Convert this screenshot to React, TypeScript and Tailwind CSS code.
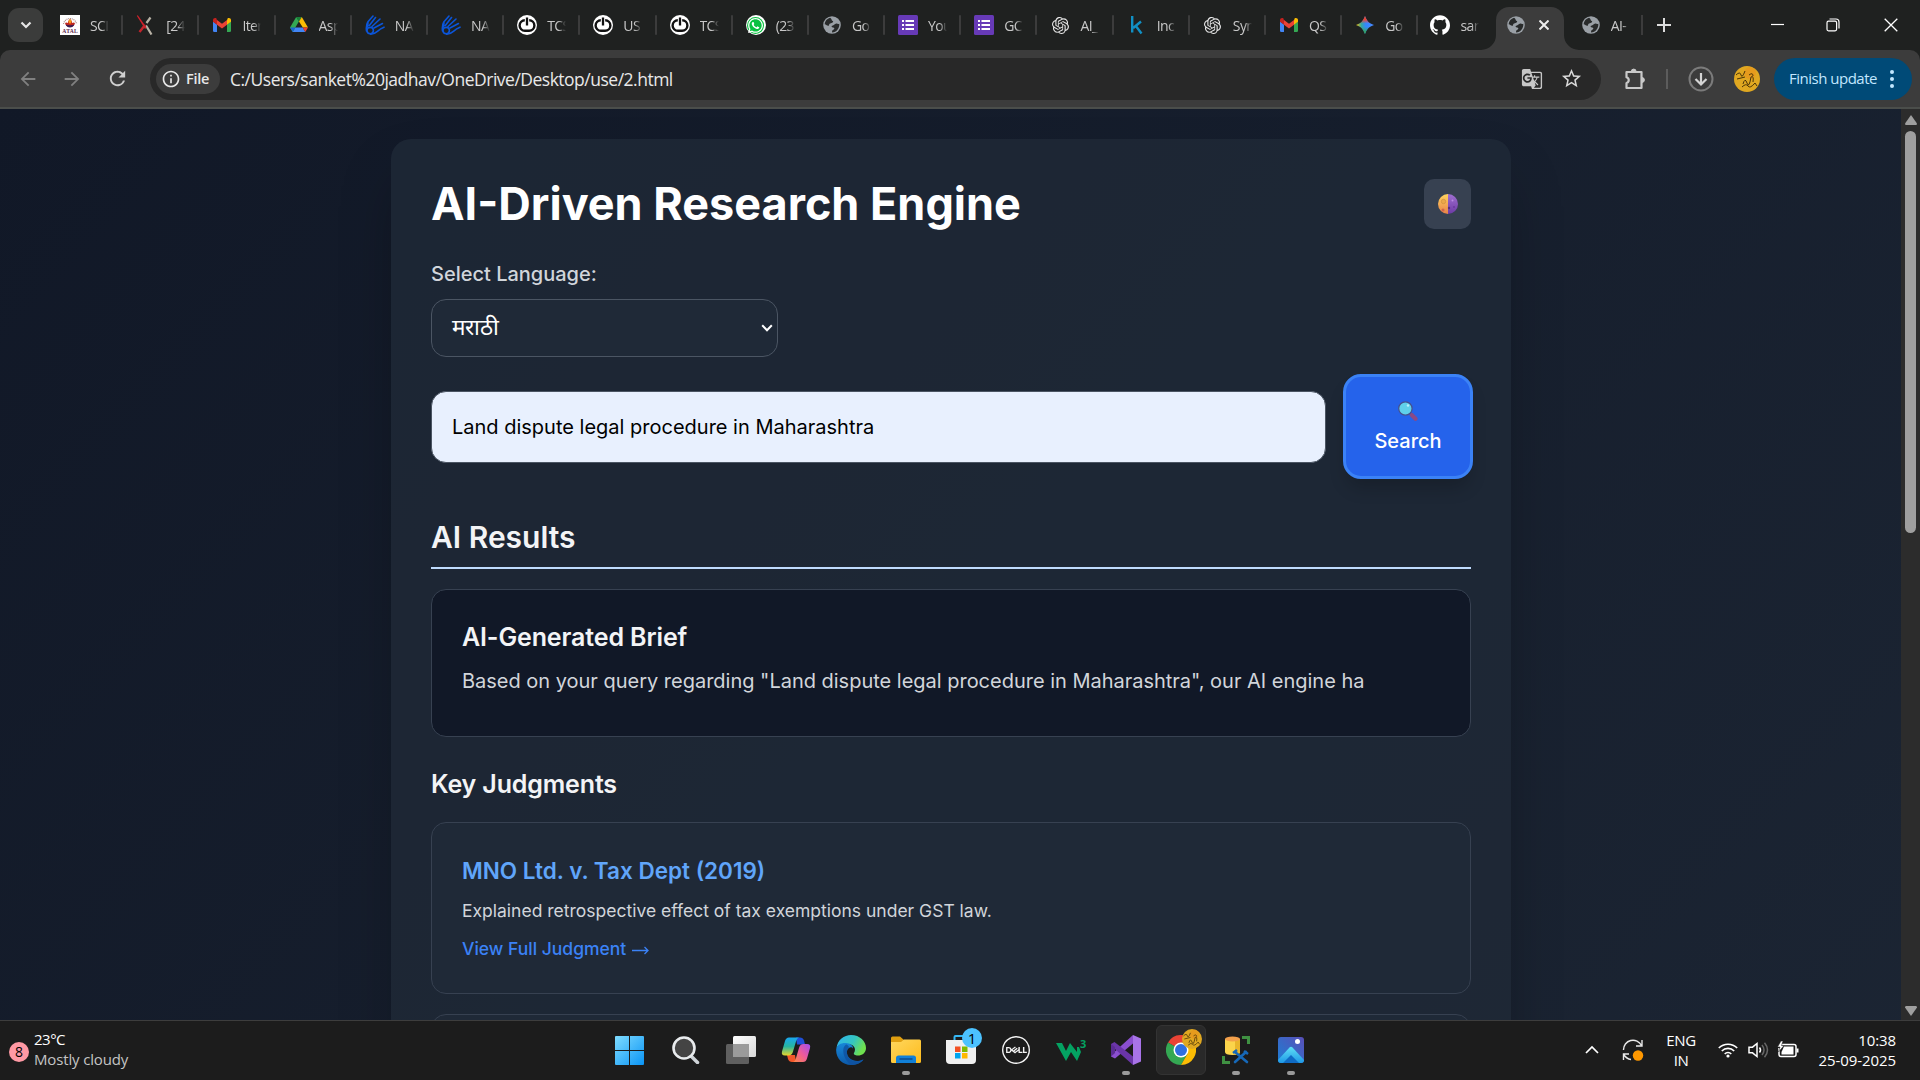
import React from "react";
import { MdGTranslate, MdStarBorder, MdArrowBack, MdArrowForward, MdRefresh, MdInfoOutline } from "react-icons/md";
import { SiOpenai, SiDell, SiGithub } from "react-icons/si";
import { FaWhatsapp } from "react-icons/fa";

const UI = "font-['Open_Sans','Noto_Sans',sans-serif]";

function Atal() {
  return (
    <svg viewBox="0 0 20 20" className="size-5">
      <rect width="20" height="20" fill="#fff" />
      <path d="M3.500 9a6.600 6.600 0 0 1 13 0" fill="none" stroke="#a88" strokeWidth="1.200" strokeDasharray="1 .8" />
      <path d="M5 8q1.500-1 3 0q-.5-2 2-4q2.500 2 2 4q1.500-1 3 0q-1 4-5 4t-5-4z" fill="#c2281e" />
      <path d="M8.500 7q0-2 1.500-3q1.500 1 1.500 3l-1.500 2z" fill="#f7a11b" />
      <path d="M5.500 9.500q4.500 1.500 9 0q-1.500 3-4.500 3t-4.500-3z" fill="#3b1d52" />
      <text x="10" y="18" fontSize="5.600" fontWeight="700" textAnchor="middle" fontFamily="Liberation Serif, serif" fill="#5b1e4b" textLength="15.500">ATAL</text>
    </svg>
  );
}
function XLogo() {
  return (
    <svg viewBox="0 0 20 20" className="size-5">
      <path d="M14.500 2.500 10.500 8M10 10.500l5.500 9" stroke="#b9b3a6" strokeWidth="2.200" fill="none" />
      <path d="M1.800.3 10.500 12.500 9 14 .8.8z" fill="#d3202a" />
      <path d="M9 10 3.500 17" stroke="#c3242b" strokeWidth="2.400" />
    </svg>
  );
}
function Gmail() {
  return (
    <svg viewBox="0 0 20 20" className="size-5">
      <path d="M1 6.500 5 9.500V17H2.300A1.300 1.300 0 0 1 1 15.700z" fill="#4285f4" />
      <path d="M19 6.500 15 9.500V17h2.700a1.300 1.300 0 0 0 1.300-1.300z" fill="#34a853" />
      <path d="M15 5.300V9.700l4-3V5c0-1.800-2-2.700-3.300-1.700z" fill="#fbbc04" />
      <path d="M5 9.700V5l5 3.800L15 5v4.700l-5 3.800z" fill="#ea4335" />
      <path d="M1 5v1.700l4 3V5.300l-.7-2C3 2.300 1 3.200 1 5z" fill="#c5221f" />
    </svg>
  );
}
function Drive() {
  return (
    <svg viewBox="0 0 20 20" className="size-5">
      <path d="M7.200 2 1 12.600l2.700 4.400L10 6.300z" fill="#34a853" />
      <path d="M7.200 2h5.600L10 6.400z" fill="#188038" />
      <path d="M12.800 2 19 12.600h-5.200L10 6.400z" fill="#fbbc04" />
      <path d="M6.300 12.600h7.400l2.600 4.400H3.700z" fill="#4285f4" />
      <path d="M13.700 12.600H19L16.300 17z" fill="#ea4335" />
      <path d="M1 12.600h5.300L3.700 17z" fill="#1967d2" />
    </svg>
  );
}
function Hand() {
  return (
    <svg viewBox="0 0 20 20" className="size-5" fill="none" stroke="#0b55d9" strokeWidth="1.600" strokeLinecap="round">
      <circle cx="5.200" cy="15.600" r="3.200" />
      <path d="M1.500 16C1 12 1.300 9.500 2.800 7L8 1M4.300 10.500 10.500 2.500M7 11.500 15 4M9 13 17.500 8.500M5.500 19.200C12 19.300 11.500 15 19 12.200M3 7.500 2.500 12" />
    </svg>
  );
}
function Power() {
  return (
    <svg viewBox="0 0 20 20" className="size-5">
      <circle cx="10" cy="10" r="10" fill="#fff" />
      <rect x="2.600" y="5.200" width="14.800" height="10.600" rx="5.300" fill="none" stroke="#111" strokeWidth="2.400" />
      <path d="M7.800 3h4.400v8H7.800z" fill="#fff" />
      <path d="M10 2.500v8" stroke="#111" strokeWidth="2.300" />
    </svg>
  );
}
function WhatsApp() {
  return (
    <span className="flex size-5 items-center justify-center rounded-full bg-white">
      <span className="flex size-[17px] items-center justify-center rounded-full bg-[#0ac140] text-white"><FaWhatsapp size={17} /></span>
    </span>
  );
}
function Globe() {
  return (
    <svg viewBox="0 0 20 20" className="size-5">
      <circle cx="10" cy="10" r="8.800" fill="#9aa0a6" />
      <path d="M8 2.800c2.500 1.200.8 2.600 2.800 3.200 1.200 1-.8 2-2.600 2.400-1.800.6-.4 2.200-2 2.300C4.500 10.500 3.800 9 2.600 9.200 3 6 5 3.600 8 2.800zM17.300 8.700c-1.300.7-2-.4-3.600 0-1.400.6-2.200 1.800-4 2.200-.6 1.300 1.200 1.400 2.200 1.800.9.700.2 1.900-1 2.300-1 .8-.9 1.700-.8 2.400 4.300-.2 7.600-3.900 7.200-8.700z" fill="#292b2b" />
    </svg>
  );
}
function Forms() {
  return (
    <svg viewBox="0 0 20 20" className="size-5">
      <rect width="20" height="20" rx="1.500" fill="#673ab7" />
      <path d="M4 6h2M4 10h2M4 14h2M7.500 6H16M7.500 10H16M7.500 14H16" stroke="#fff" strokeWidth="2.200" />
    </svg>
  );
}
function Kaggle() {
  return (
    <svg viewBox="0 0 20 20" className="size-5" fill="none" stroke="#1190c4" strokeWidth="2.400">
      <path d="M5.200 1v16.500M14 6.500 6.200 13M8.500 10.500l6 8" />
    </svg>
  );
}
function Gemini() {
  return (
    <svg viewBox="0 0 20 20" className="size-5">
      <defs>
        <linearGradient id="gem" x1="0" y1="0.500" x2="1" y2="0.500"><stop offset="0" stopColor="#fbbc04" /><stop offset=".3" stopColor="#34a8a0" /><stop offset=".55" stopColor="#3186ff" /><stop offset="1" stopColor="#4b8bff" /></linearGradient>
        <linearGradient id="gem2" x1="0" y1="0" x2="0" y2="1"><stop offset="0" stopColor="#ea4335" /><stop offset=".2" stopColor="#ea4335" /><stop offset=".42" stopColor="#ea4335" stopOpacity="0" /><stop offset=".6" stopColor="#34a853" stopOpacity="0" /><stop offset=".9" stopColor="#34a853" /></linearGradient>
      </defs>
      <path d="M10 1c1.800 5 4 7.200 9 9-5 1.800-7.200 4-9 9-1.800-5-4-7.200-9-9 5-1.800 7.200-4 9-9z" fill="url(#gem)" />
      <path d="M10 1c1.800 5 4 7.200 9 9-5 1.800-7.200 4-9 9-1.800-5-4-7.200-9-9 5-1.800 7.200-4 9-9z" fill="url(#gem2)" />
    </svg>
  );
}

const tabs: [React.ReactNode, string][] = [
  [<Atal />, "SCI"], [<XLogo />, "[24"], [<Gmail />, "Iter"], [<Drive />, "Asp"], [<Hand />, "NA"], [<Hand />, "NA"],
  [<Power />, "TCS"], [<Power />, "US"], [<Power />, "TCS"], [<WhatsApp />, "(23"], [<Globe />, "Go"], [<Forms />, "You"], [<Forms />, "GC"],
  [<SiOpenai size={17} color="#e8e8e8" />, "AI_"], [<Kaggle />, "Inc"], [<SiOpenai size={17} color="#e8e8e8" />, "Syn"],
  [<Gmail />, "QS"], [<Gemini />, "Go"],
];

function TabTitle({ children }: { children: React.ReactNode }) {
  return <span className="ml-[10px] w-[19px] overflow-hidden whitespace-nowrap pt-px text-[14px] tracking-[-0.600px] text-[#c8c8c8] [mask-image:linear-gradient(to_right,black_60%,transparent)]">{children}</span>;
}

function TabStrip() {
  return (
    <div className="flex h-[50px] shrink-0">
      <div className="mt-2 mr-[4px] ml-2 flex h-[34px] w-[35px] items-center justify-center rounded-[11px] bg-[#3b3c3b]">
        <svg viewBox="0 0 12 8" className="h-2 w-3" fill="none" stroke="#e6e6e6" strokeWidth="2.200"><path d="m1.500 1.500 4.500 4.500 4.500-4.500" /></svg>
      </div>
      {tabs.map(([icon, t], i) => (
        <div key={i} className="flex h-[50px] w-[76.200px] shrink-0 items-center pl-[13px]">
          <span className="flex size-5 shrink-0 items-center justify-center">{icon}</span>
          <TabTitle>{t}</TabTitle>
          <span className="ml-auto h-5 w-[2px] shrink-0 rounded bg-[#3c3c3c]" />
        </div>
      ))}
      <div className="flex w-[77.400px] shrink-0 items-center pl-[12px]">
        <SiGithub size={20} color="#fff" />
        <TabTitle>san</TabTitle>
      </div>
      <div className="relative mt-[7px] flex h-[43px] w-[68px] shrink-0 items-center rounded-t-[13px] bg-[#3c3c3c] pb-[7px] pl-[10px]">
        <svg viewBox="0 0 15 15" className="absolute bottom-0 -left-[15px] size-[15px]"><path d="M15 0v15H0A15 15 0 0 0 15 0" fill="#3c3c3c" /></svg>
        <svg viewBox="0 0 15 15" className="absolute -right-[15px] bottom-0 size-[15px]"><path d="M0 0v15h15A15 15 0 0 1 0 0" fill="#3c3c3c" /></svg>
        <Globe />
        <svg viewBox="0 0 10 10" className="ml-[13px] size-[10px]" stroke="#eee" strokeWidth="2"><path d="m.5.5 9 9m0-9-9 9" /></svg>
      </div>
      <div className="flex w-[79px] items-center pl-[17px]">
        <Globe />
        <TabTitle>AI-</TabTitle>
        <span className="ml-auto h-5 w-[2px] bg-[#3c3c3c]" />
      </div>
      <div className="flex items-center pl-[14px]">
        <svg viewBox="0 0 14 14" className="size-[14px]" stroke="#ddd" strokeWidth="2"><path d="M7 0v14M0 7h14" /></svg>
      </div>
      <div className="mr-[22px] ml-auto flex items-center">
        <svg viewBox="0 0 14 14" className="size-[14px]" stroke="#fff" strokeWidth="1.200"><path d="M1 6.500h13" /></svg>
        <svg viewBox="0 0 14 14" className="ml-[42px] size-[14px]" fill="none" stroke="#fff" strokeWidth="1.200"><rect x="1" y="3.200" width="9.600" height="9.600" rx="1.500" /><path d="M3.500 1h6.500q3 0 3 3v6.500" /></svg>
        <svg viewBox="0 0 14 14" className="ml-[44px] size-[14px]" stroke="#fff" strokeWidth="1.300"><path d="m.7.700 12.600 12.600M13.300.700.700 13.300" /></svg>
      </div>
    </div>
  );
}

function Avatar() {
  return (
    <svg viewBox="0 0 26 26" className="size-full">
      <circle cx="13" cy="13" r="13" fill="#e0a821" />
      <circle cx="16" cy="7" r="6" fill="#e8951c" opacity=".7" />
      <path d="M2 9q4-4 5 0t4-4M3 13l8-2M9 18q2-7 4-1t4-6q3-2 2 5M8 21q4-4 6-1t7-3l2 3M15 9q4-3 4 1" fill="none" stroke="#4a3408" strokeWidth="1" />
    </svg>
  );
}

function Toolbar() {
  return (
    <div className="flex h-[59px] shrink-0 items-center rounded-t-[10px] border-b-2 border-[#4b4e4b] bg-[#3c3c3c]">
      <MdArrowBack size={22} color="#808080" className="ml-[17px]" />
      <MdArrowForward size={22} color="#808080" className="ml-[22px]" />
      <MdRefresh size={23} color="#cfcfcf" className="ml-[23px]" />
      <div className="ml-[21px] flex h-[42px] w-[1451px] items-center rounded-full bg-[#282828] pr-[18px] pl-[6px]">
        <div className="flex h-[30px] w-16 items-center rounded-full bg-[#3c3c3c] pl-[5px] text-[#e8e8e8]">
          <MdInfoOutline size={20} />
          <span className="ml-[5px] text-[14.500px] font-semibold tracking-[-0.300px]">File</span>
        </div>
        <span className="ml-[10px] pt-[2px] text-[17.500px] tracking-[-0.500px] whitespace-nowrap text-[#e8e8e8]">C:/Users/sanket%20jadhav/OneDrive/Desktop/use/2.html</span>
        <MdGTranslate size={22} color="#c7c7c7" className="ml-auto" />
        <MdStarBorder size={23} color="#d8d8d8" className="ml-[17px]" />
      </div>
      <svg viewBox="0 0 24 24" className="ml-[22px] size-6" fill="none" stroke="#c9c9c9" strokeWidth="2.200" strokeLinejoin="round">
        <path d="M3.500 5h15v16h-15v-5a3 3 0 0 0 0-5.800z" />
        <path d="M8.300 4.500a2.400 2.400 0 0 1 4.800 0z" fill="#c9c9c9" strokeWidth="1" /><path d="M19 10.600a2.400 2.400 0 0 1 0 4.800z" fill="#c9c9c9" strokeWidth="1" />
      </svg>
      <span className="ml-[19px] h-5 w-[2px] bg-[#5c5c5c]" />
      <svg viewBox="0 0 26 26" className="ml-5 size-[26px]" fill="none"><circle cx="13" cy="13" r="11.500" stroke="#7b7b7b" strokeWidth="2" /><path d="M13 7v11M7.500 13 13 18.500 18.500 13" stroke="#d5d5d5" strokeWidth="2.200" /></svg>
      <span className="ml-5 size-[26px]"><Avatar /></span>
      <div className="ml-[14px] flex h-[42px] w-[138px] items-center rounded-full bg-[#004a77] pl-[15px] text-[15px] tracking-[-0.500px] whitespace-nowrap text-[#c2e7ff]">
        <span className="w-[89px]">Finish update</span>
        <svg viewBox="0 0 4 18" className="ml-3 h-[18px] w-1" fill="#c2e7ff"><circle cx="2" cy="2" r="2" /><circle cx="2" cy="9" r="2" /><circle cx="2" cy="16" r="2" /></svg>
      </div>
    </div>
  );
}

function MoonEmoji() {
  return (
    <svg viewBox="0 0 20 20" className="size-5">
      <defs>
        <linearGradient id="my" x1="0" y1="0" x2="0" y2="1"><stop offset="0" stopColor="#ffd45e" /><stop offset="1" stopColor="#e8824a" /></linearGradient>
        <linearGradient id="mp" x1="0" y1="0" x2="0" y2="1"><stop offset="0" stopColor="#a06fd0" /><stop offset="1" stopColor="#6d3aa5" /></linearGradient>
      </defs>
      <path d="M10 0a10 10 0 0 0 0 20z" fill="url(#my)" />
      <path d="M10 0a10 10 0 0 1 0 20z" fill="url(#mp)" />
      <circle cx="5.500" cy="7.500" r="2.200" fill="#eba84a" stroke="#c88a3c" strokeWidth=".6" />
      <circle cx="5" cy="16" r="1.500" fill="#d0644a" />
      <circle cx="11" cy="14" r="1.200" fill="#573080" />
      <circle cx="14.500" cy="6.500" r="1" fill="#b78be0" /><circle cx="16" cy="13" r="1" fill="#6a3a9c" />
    </svg>
  );
}
function MagnifierEmoji() {
  return (
    <svg viewBox="0 0 20 20" className="size-5 shrink-0">
      <path d="m12.500 12.500 2 2" stroke="#5a4a78" strokeWidth="2.500" />
      <path d="m13.800 14 3.700 3.700" stroke="#8a4a86" strokeWidth="4.200" strokeLinecap="round" />
      <circle cx="7.400" cy="7.500" r="6.700" fill="#5fd0ea" stroke="#46508c" strokeWidth="1.200" />
      <circle cx="10" cy="4.500" r="1.200" fill="#b9f0fa" />
    </svg>
  );
}

function Page() {
  return (
    <main className="h-[1967px] w-[1901px] shrink-0 bg-linear-to-br from-[#111827] to-[#1f2937] pt-[30px] pl-[391px] font-['Inter',sans-serif]">
      <div className="h-[1900px] w-[1120px] rounded-[20px] bg-[#1f2937]/80 p-10 shadow-[0_31px_62px_-15px_rgba(0,0,0,0.35)]">
        <div className="flex h-[50px] items-center justify-between">
          <h1 className="text-[45px] leading-[50px] font-bold whitespace-nowrap text-white">AI-Driven Research Engine</h1>
          <div className="flex h-[50px] w-[47px] items-center justify-center rounded-[10px] bg-[#374151]"><MoonEmoji /></div>
        </div>
        <div className="mt-[30px] text-[20px] leading-[30px] font-medium text-[#d1d5db]">Select Language:</div>
        <div className="mt-[10px] flex h-[58px] w-[347px] items-center justify-between rounded-[15px] border border-[#4b5563] bg-[#1f2937] pr-1 pl-5 text-[22.500px] leading-[30px] text-white">
          <span className="pb-[3px]">मराठी</span>
          <svg viewBox="0 0 12 8" className="h-2 w-3" fill="none" stroke="#fff" strokeWidth="2"><path d="m1.200 1.200 4.800 5 4.800-5" /></svg>
        </div>
        <div className="mt-[20px] flex h-[100px] items-center gap-5">
          <div className="flex h-[72px] w-[895px] items-center rounded-[15px] border border-[#4b5563] bg-[#e8f0fe] pl-5 text-[20px] text-black">Land dispute legal procedure in Maharashtra</div>
          <div className="-mt-px -mr-[2px] -ml-[3px] flex h-[105px] w-[130px] shrink-0 flex-col items-center rounded-[18px] border-3 border-[#3b82f6] bg-[#2563eb] pt-[24px] text-[20px] leading-[30px] font-medium text-white shadow-[0_12px_18px_-4px_rgba(0,0,0,0.2)]">
            <MagnifierEmoji />
            <span className="mt-[5px]">Search</span>
          </div>
        </div>
        <h2 className="mt-[40px] h-[52px] border-b-2 border-[#bfdbfe] text-[30px] leading-[40px] font-semibold text-[#f3f4f6]">AI Results</h2>
        <section className="mt-5 h-[148px] rounded-[15px] border border-[#374151] bg-[#111827] px-[30px] pt-[30px]">
          <h3 className="text-[25px] leading-[35px] font-semibold tracking-[-0.120px] text-[#f3f4f6]">AI-Generated Brief</h3>
          <p className="mt-[10px] text-[20px] leading-[32px] tracking-[-0.012px] whitespace-nowrap text-[#d1d5db]">Based on your query regarding "Land dispute legal procedure in Maharashtra", our AI engine ha</p>
        </section>
        <h3 className="mt-[30px] text-[25px] leading-[35px] font-semibold tracking-[-0.150px] text-[#f3f4f6]">Key Judgments</h3>
        <section className="mt-5 h-[172px] rounded-[15px] border border-[#374151] bg-[#1f2937] px-[30px] pt-[30px]">
          <h4 className="text-[22.500px] leading-[35px] font-semibold text-[#60a5fa]">MNO Ltd. v. Tax Dept (2019)</h4>
          <p className="mt-[8px] text-[17.500px] leading-[30px] text-[#d1d5db]">Explained retrospective effect of tax exemptions under GST law.</p>
          <div className="mt-[8px] flex items-center text-[17.500px] leading-[30px] font-medium text-[#3b82f6]">
            View Full Judgment
            <svg viewBox="0 0 17 9" className="mt-[3px] ml-[6px] h-[9px] w-[17px]" fill="none" stroke="#3b82f6" strokeWidth="1.300"><path d="M0 4.500h16M12.500 1l3.500 3.500L12.500 8" /></svg>
          </div>
        </section>
        <section className="mt-5 h-[172px] rounded-[15px] border border-[#374151] bg-[#1f2937]" />
      </div>
    </main>
  );
}

function Scrollbar() {
  return (
    <div className="flex h-full w-[19px] shrink-0 flex-col items-center bg-[#2c2c2c]">
      <svg viewBox="0 0 12 10" className="mt-[6px] h-[10px] w-3" fill="#9f9f9f"><path d="M6 0 12 8.500Q12 10 11 10H1Q0 10 0 8.500z" /></svg>
      <div className="mt-[6px] h-[402px] w-[11px] rounded-full bg-[#9f9f9f]" />
      <svg viewBox="0 0 12 10" className="mt-auto mb-[4px] h-[10px] w-3" fill="#9f9f9f"><path d="M6 10 12 1.500Q12 0 11 0H1Q0 0 0 1.500z" /></svg>
    </div>
  );
}

function Win() {
  return (
    <svg viewBox="0 0 29 29" className="mr-[3px] size-[29px]">
      <defs><linearGradient id="win" x1="0" y1="0" x2="29" y2="29" gradientUnits="userSpaceOnUse"><stop offset="0" stopColor="#7fdcff" /><stop offset="1" stopColor="#0a94f5" /></linearGradient></defs>
      <path d="M0 1q0-1 1-1h13v14H0zM15 0h13q1 0 1 1v13H15zM0 15h14v14H1q-1 0-1-1zM15 15h14v13q0 1-1 1H15z" fill="url(#win)" />
    </svg>
  );
}
function SearchI() {
  return (
    <svg viewBox="0 0 28 28" className="size-7" fill="none">
      <path d="m19 20 6.500 6.500" stroke="#cfd4d8" strokeWidth="3.500" strokeLinecap="round" />
      <circle cx="12" cy="12" r="10.500" fill="#444" stroke="#e9ecee" strokeWidth="2.600" />
    </svg>
  );
}
function TaskView() {
  return (
    <svg viewBox="0 0 30 28" className="h-7 w-[30px]">
      <defs><linearGradient id="tv" x1="0" y1="0" x2="1" y2="1"><stop offset="0" stopColor="#fff" /><stop offset="1" stopColor="#d8d8d8" /></linearGradient></defs>
      <rect x="0" y="8" width="23" height="20" rx="1.500" fill="#5f5f5f" />
      <rect x="7" y="0" width="23" height="21" rx="1.500" fill="url(#tv)" />
      <path d="M7 8h16v13H7z" fill="#9b9b9b" />
    </svg>
  );
}
function Copilot() {
  return (
    <svg viewBox="0 0 30 28" className="h-7 w-[30px]">
      <defs>
        <linearGradient id="c1" x1="0" y1="0" x2="0" y2="1"><stop offset="0" stopColor="#19a7f0" /><stop offset=".5" stopColor="#27b5a0" /><stop offset="1" stopColor="#e8d62c" /></linearGradient>
        <linearGradient id="c2" x1="1" y1="0" x2="0" y2="1"><stop offset="0" stopColor="#a14df0" /><stop offset=".5" stopColor="#ee5a9a" /><stop offset="1" stopColor="#fb8b44" /></linearGradient>
      </defs>
      <path d="M15 1.500h4q3 0 4 3l1 4h-8z" fill="#1f4fd8" />
      <path d="M15 26h-4q-3 0-4-3l-1-4h8z" fill="#f4572a" />
      <path d="M8 1.500h10q-2 .5-3 4l-3 10q-1 4-4.500 4H4q-4 0-3-4L4 5Q5 1.500 8 1.500z" fill="url(#c1)" />
      <path d="M22 26H12q2-.5 3-4l3-10q1-4 4.500-4H26q4 0 3 4l-3 10.500Q25 26 22 26z" fill="url(#c2)" />
    </svg>
  );
}
function Edge() {
  return (
    <svg viewBox="0 0 30 30" className="size-[30px]">
      <defs>
        <linearGradient id="e1" x1="0" y1="0" x2="1" y2=".4"><stop offset="0" stopColor="#2eb3f0" /><stop offset=".6" stopColor="#35c5c0" /><stop offset="1" stopColor="#6fe04e" /></linearGradient>
        <linearGradient id="e2" x1="0" y1="0" x2="0" y2="1"><stop offset="0" stopColor="#1787d8" /><stop offset="1" stopColor="#0c59a8" /></linearGradient>
      </defs>
      <path d="M.5 13C1.500 5 8 0 15 0c9 0 15 6.500 15 13 0 5-4 7.500-8 7.500-3 0-4.800-1.200-4-2.500 3-5-1-9-6-9S2 10 .5 13z" fill="url(#e1)" />
      <path d="M.2 14C1 9.500 6 7.500 10 8c4.500.3 7.500 3 7 5.500C16 11.500 12 12 11 16c-1 6 5 10.500 11 10 3-.3 4.500-1.600 5.500-1.500C24.500 28.500 20 30 15 30 6 30-.5 23 .2 14z" fill="url(#e2)" />
      <path d="M10 9.500C5 13 7 24 15 29.900c5 .3 10-2 12.500-5.400-8 4-15.500.5-16.500-6-.3-3 .5-5 2-6.200-.4-1.500-1.500-2.500-3-2.800z" fill="#0f4f9e" opacity=".75" />
    </svg>
  );
}
function Folder() {
  return (
    <svg viewBox="0 0 30 28" className="h-7 w-[30px]">
      <defs><linearGradient id="fo" x1="0" y1="0" x2="1" y2="1"><stop offset="0" stopColor="#ffd75e" /><stop offset="1" stopColor="#fdbb1c" /></linearGradient></defs>
      <path d="M0 2q0-1.500 1.500-1.500H9L13 4H28v10H0z" fill="#e09f10" />
      <path d="M0 6h10l3-2.500h15.500Q30 3.500 30 5v20.500q0 1.500-1.500 1.500h-27Q0 27 0 25.500z" fill="url(#fo)" />
      <path d="M5 27v-5q0-2.500 2.500-2.500h15Q25 19.500 25 22v5z" fill="#1180d8" /><path d="M8.500 23h13" stroke="#0b4a8c" strokeWidth="1.500" />
    </svg>
  );
}
function Store() {
  return (
    <span className="relative">
      <svg viewBox="0 0 30 30" className="size-[30px]">
        <path d="M8.500 5V2q0-1 1-1h10q1 0 1 1v3" fill="none" stroke="#35b8f5" strokeWidth="2" />
        <path d="M0 5h30v20q0 4-4 4H4q-4 0-4-4z" fill="#f0f0f0" />
        <path d="M9 11.500h5.500V17H9z" fill="#f25022" /><path d="M16 11.500h5.500V17H16z" fill="#7fba00" /><path d="M9 18h5.500v5.500H9z" fill="#00a4ef" /><path d="M16 18h5.500v5.500H16z" fill="#ffb900" />
      </svg>
      <span className="absolute -top-[7px] left-[16px] flex size-5 items-center justify-center rounded-full bg-[#4cc2ff] text-[15px] leading-none text-black">1</span>
    </span>
  );
}
function Dell() {
  return <SiDell size={28} color="#f4f4f4" />;
}
function W3() {
  return (
    <svg viewBox="0 0 30 24" className="h-6 w-[30px]">
      <path d="M0 5h6l4 8 4-8 7 9v-5h2l2 5-4 9-6-9-5 9z" fill="#04a262" />
      <text x="24" y="10" fontSize="11" fontWeight="700" fontFamily="Open Sans, sans-serif" fill="#04a262">3</text>
    </svg>
  );
}
function VS() {
  return (
    <svg viewBox="0 0 30 30" className="size-[30px]">
      <path d="M22 0v8.500L4 23.500 0 21.500V20L22 0z" fill="#8b4fcf" />
      <path d="M0 9l3.500-2L22 21.500V30L0 10.500z" fill="#6a35a8" />
      <path d="M0 9v12.500l4-3.500V12z" fill="#5b2c94" />
      <path d="M22 0l8 3.500v23L22 30z" fill="#a873e8" />
    </svg>
  );
}
function Chrome() {
  return (
    <span className="relative">
      <svg viewBox="0 0 30 30" className="size-[30px]">
        <path d="M15 15 2 7.500A15 15 0 0 1 28 7.500H15z" fill="#ea4335" />
        <path d="M15 15 21.500 18.700 15 30A15 15 0 0 1 2 7.500z" fill="#34a853" />
        <path d="M15 7.500h13A15 15 0 0 1 15 30l6.500-11.300z" fill="#fbbc04" />
        <circle cx="15" cy="15" r="7.500" fill="#fff" /><circle cx="15" cy="15" r="6" fill="#2f6fe0" />
      </svg>
      <span className="absolute -top-[6px] left-[16px] size-5"><Avatar /></span>
    </span>
  );
}
function Sql() {
  return (
    <svg viewBox="0 0 28 28" className="size-7">
      <path d="M20 1.500h6.500V8M1.500 20v6.500H8" fill="none" stroke="#3f9142" strokeWidth="3" />
      <path d="M3 3v13q0 3 7.500 3T18 16V3z" fill="#fbd44b" /><path d="M13 3v16q5-.5 5-3V3z" fill="#e9b52c" />
      <ellipse cx="10.500" cy="3" rx="7.500" ry="2.500" fill="#f3a04b" />
      <path d="m13 26 11-10M13 16l12 10" stroke="#1668b8" strokeWidth="2.600" strokeLinecap="round" /><path d="m11 17 4-3M22 15l4 3" stroke="#1668b8" strokeWidth="2.500" />
    </svg>
  );
}
function Photos() {
  return (
    <svg viewBox="0 0 26 26" className="size-[26px]">
      <defs>
        <linearGradient id="ph" x1="0" y1="1" x2="1" y2="0"><stop offset="0" stopColor="#1b7fd4" /><stop offset="1" stopColor="#5a4fb8" /></linearGradient>
        <linearGradient id="ph2" x1="0" y1="0" x2="0" y2="1"><stop offset="0" stopColor="#5fe0f5" /><stop offset="1" stopColor="#1a93e6" /></linearGradient>
        <clipPath id="phc"><rect width="26" height="26" rx="3" /></clipPath>
      </defs>
      <g clipPath="url(#phc)"><rect width="26" height="26" fill="url(#ph)" /><path d="M-1 24 11.500 10.500q1.500-1.500 3 0L27 24v3H-1z" fill="url(#ph2)" /><path d="M5 26 13 18l8 8z" fill="#0f6bc4" /></g>
      <circle cx="19.500" cy="4.500" r="2.500" fill="#fff" />
    </svg>
  );
}

const apps: [React.ReactNode, boolean][] = [
  [<Win />, false], [<SearchI />, false], [<TaskView />, false], [<Copilot />, false], [<Edge />, false], [<Folder />, true], [<Store />, false],
  [<Dell />, false], [<W3 />, false], [<VS />, true], [<Chrome />, false], [<Sql />, true], [<Photos />, true],
];

function Taskbar() {
  return (
    <footer className="grid h-[60px] shrink-0 grid-cols-[1fr_auto_1fr] border-t border-[#3d3d3d] bg-[#1c1c1c] text-[15px] leading-5 text-white">
      <div className="flex pl-[9px]">
        <span className="mt-[21px] flex size-5 items-center justify-center rounded-full bg-[#ff99a4] text-[14px] text-black">8</span>
        <div className="ml-[5px] pt-[8px]">
          <div className="tracking-[-0.500px]">23°C</div>
          <div className="tracking-[-0.150px] text-[#c4c4c4]">Mostly cloudy</div>
        </div>
      </div>
      <div className="flex pl-[2px]">
        {apps.map(([icon, running], i) => (
          <div key={i} className={"relative flex w-[55px] justify-center " + (i === 10 ? "before:absolute before:top-[4px] before:h-[50px] before:w-[50px] before:rounded-md before:border before:border-[#333] before:bg-[#292929]" : "")}>
            <div className="relative flex h-[58px] items-center">{icon}</div>
            {running && <span className="absolute bottom-[5px] h-1 w-2 rounded-full bg-[#9a9a9a]" />}
          </div>
        ))}
      </div>
      <div className="flex h-[57px] items-center justify-end pr-[24px]">
        <svg viewBox="0 0 14 9" className="h-[9px] w-[14px]" fill="none" stroke="#fff" strokeWidth="1.700"><path d="m1 8 6-6 6 6" /></svg>
        <svg viewBox="0 0 22 22" className="ml-[23px] size-[22px]" fill="none" stroke="#e8e8e8" strokeWidth="1.400">
          <path d="M1.500 11A9.500 9.500 0 0 1 19.500 6.500M20 1v6h-6M9 20.500A10 10 0 0 1 2 16M1.500 21v-6h5.500" /><circle cx="16" cy="16.500" r="5.200" fill="#ff9800" stroke="none" />
        </svg>
        <div className="ml-[22px] w-[30px] text-center tracking-[-0.400px]"><div>ENG</div><div>IN</div></div>
        <svg viewBox="0 0 20 16" className="ml-[22px] h-4 w-5" fill="none" stroke="#fff" strokeWidth="1.600"><path d="M.8 6a13 13 0 0 1 18.400 0M3.800 9a8.700 8.700 0 0 1 12.400 0M6.700 12a4.700 4.700 0 0 1 6.600 0" /><circle cx="10" cy="14" r="1.600" fill="#fff" stroke="none" /></svg>
        <svg viewBox="0 0 21 18" className="ml-[10px] h-[18px] w-[21px]" fill="none" stroke="#fff" strokeWidth="1.500"><path d="M1 6.200h3.500L9 2.500v13l-4.500-3.700H1zM11.500 6.500q2 2.500 0 5" /><path d="M14 4q4 5 0 10M16.500 1.800q6 7.200 0 14.400" stroke="#666" /></svg>
        <svg viewBox="0 0 22 18" className="ml-[8px] h-[18px] w-[22px]"><path d="M4 3.500h13q2 0 2 2v8q0 2-2 2H4q-2 0-2-2V7" fill="none" stroke="#fff" strokeWidth="1.500" /><path d="M7 5.500h9.500v8H4.500V11z" fill="#fff" /><path d="M19.500 7.500h2v4h-2z" fill="#fff" /><path d="M4 0 .5 6H3l-1.500 5L7 4.500H4.500L6 0z" fill="#fff" stroke="#1c1c1c" strokeWidth=".5" /></svg>
        <div className="w-[97px] text-right tracking-[-0.080px]"><div>10:38</div><div>25-09-2025</div></div>
      </div>
    </footer>
  );
}

export default function App() {
  return (
    <div className={"flex h-[1080px] w-[1920px] flex-col overflow-hidden bg-[#1f2120] " + UI}>
      <TabStrip />
      <Toolbar />
      <div className="flex h-[911px] items-start overflow-hidden">
        <Page />
        <Scrollbar />
      </div>
      <Taskbar />
    </div>
  );
}
